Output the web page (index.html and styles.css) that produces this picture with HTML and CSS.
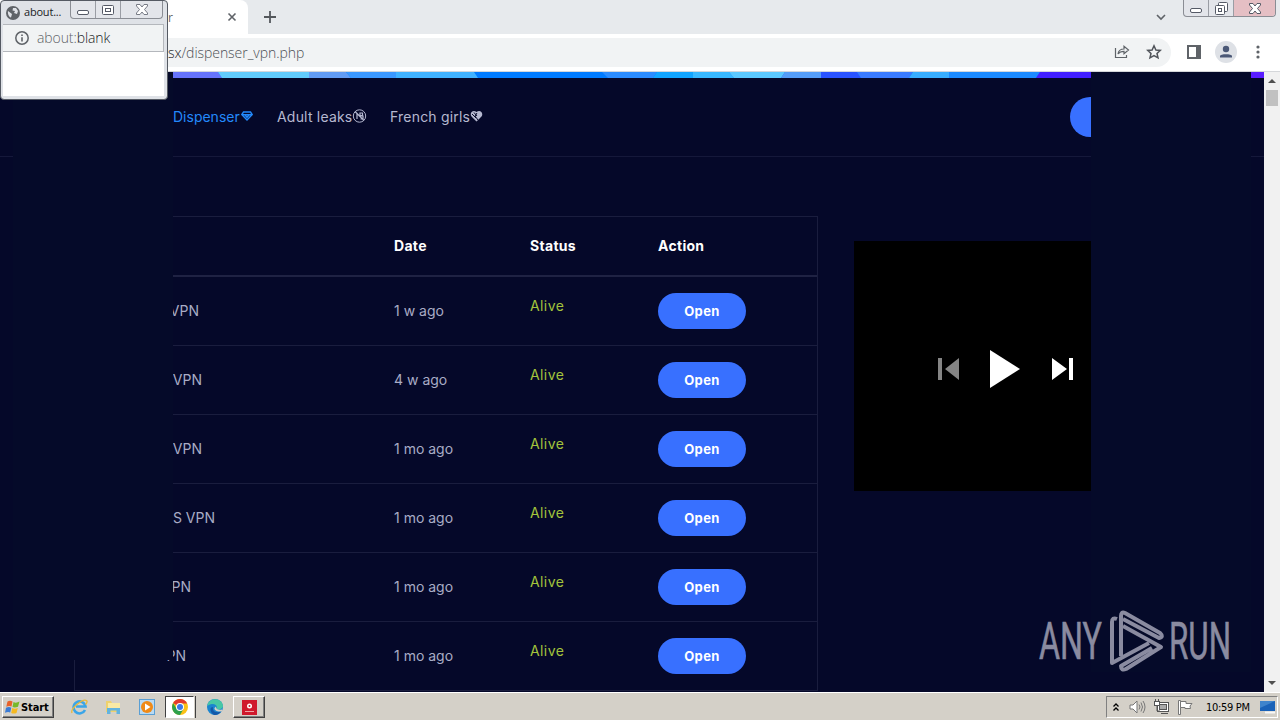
FILE: index.html
```html
<!DOCTYPE html>
<html lang="en">
<head>
    <meta charset="UTF-8">
    <meta name="viewport" content="width=device-width, initial-scale=1.0">
    <link rel="stylesheet" href="styles.css">
    <title>Dispenser</title>
</head>
<body>
    <!-- browser tabs -->
    <div class="tab-strip">
        <div class="tab">
            <span class="tab-title">r</span>
            <svg class="tab-close" width="10" height="10" viewBox="0 0 10 10"><path d="M1.500 1.500L8.500 8.500M8.500 1.500L1.500 8.500" stroke="#5f6368" stroke-width="1.600"/></svg>
        </div>
        <svg class="new-tab" width="12" height="12" viewBox="0 0 12 12"><path d="M6 0V12M0 6H12" stroke="#54585c" stroke-width="1.800"/></svg>
        <svg class="tab-search" width="10" height="7" viewBox="0 0 10 7"><path d="M1 1L5 5L9 1" fill="none" stroke="#5f6368" stroke-width="1.600"/></svg>
        <div class="win-buttons">
            <span class="win-btn"><svg width="12" height="12" viewBox="0 0 12 12"><rect x=".5" y="6.500" width="11" height="4" rx="1.500" fill="#fff" stroke="#555a66"/></svg></span>
            <span class="win-btn"><svg width="13" height="13" viewBox="0 0 13 13" fill="#fff" stroke="#555a66"><rect x="3.500" y=".5" width="9" height="9" rx="1"/><rect x=".5" y="3.500" width="9" height="9" rx="1"/><rect x="3.500" y="6.500" width="3" height="3"/></svg></span>
            <span class="win-btn win-close"><svg width="12" height="11" viewBox="0 0 12 11"><path d="M.5.5H4L6 3L8 .5H11.5V2L8.500 5.500L11.500 9V10.500H8L6 8L4 10.500H.5V9L3.500 5.500L.5 2Z" fill="#fff" stroke="#555a66"/></svg></span>
        </div>
    </div>

    <!-- address bar -->
    <div class="toolbar">
        <div class="address">
            <span class="url"><b>sx</b>/dispenser_vpn.php</span>
            <svg width="16" height="14" viewBox="0 0 16 14" fill="none" stroke="#5f6368" stroke-width="1.200"><path d="M1.500 3V12.500H12.500V10"/><path d="M4 9C4.500 5.500 7 4 10 4V1.300L14.500 5L10 8.700V6.300C7.500 6.300 5.500 7 4 9Z"/></svg>
            <svg width="16" height="16" viewBox="0 0 16 16"><path d="M8 1.800L9.900 6L14.300 6.400L11 9.400L12 13.800L8 11.500L4 13.800L5 9.400L1.700 6.400L6.100 6Z" fill="none" stroke="#50545a" stroke-width="1.500"/></svg>
        </div>
        <svg class="side-panel" width="14" height="14" viewBox="0 0 14 14"><rect x="1" y="1" width="12" height="12" fill="#fff" stroke="#5f6368" stroke-width="2"/><rect x="9" y="0" width="5" height="14" fill="#5f6368"/></svg>
        <svg class="profile" width="22" height="22" viewBox="0 0 22 22"><circle cx="11" cy="11" r="11" fill="#dee1e6"/><circle cx="11" cy="8" r="3.200" fill="#4b5876"/><path d="M5 16.500V15C5 12.500 17 12.500 17 15V16.500Z" fill="#4b5876"/></svg>
        <svg class="menu" width="4" height="14" viewBox="0 0 4 14" fill="#5f6368"><circle cx="2" cy="2" r="1.600"/><circle cx="2" cy="7" r="1.600"/><circle cx="2" cy="12" r="1.600"/></svg>
    </div>

    <div class="viewport">
        <main class="page">
            <svg class="rainbow" width="1264" height="6" viewBox="0 0 1264 6">
                <rect width="1264" height="6" fill="#007bff"/>
                <rect width="173" height="6" fill="#050829"/>
                <path d="M173 0H218L222 6H173Z" fill="#6673fb"/>
                <path d="M218 0H309V6H222Z" fill="#62ccfc"/>
                <path d="M309 0H346L351 6H309Z" fill="#629cf5"/>
                <path d="M346 0H396V6H351Z" fill="#3b98ff"/>
                <path d="M396 0H474L478 6H396Z" fill="#40b2ff"/>
                <path d="M602 0H657L653 6H608Z" fill="#2b8cff"/>
                <path d="M657 0H693V6H653Z" fill="#12a5ff"/>
                <path d="M693 0H729L734 6H693Z" fill="#38b8ff"/>
                <path d="M729 0H785L781 6H734Z" fill="#5cc9ff"/>
                <path d="M785 0H821V6H781Z" fill="#559df8"/>
                <path d="M821 0H857L861 6H821Z" fill="#2a53ff"/>
                <path d="M857 0H913L909 6H861Z" fill="#3a7bff"/>
                <path d="M913 0H949V6H909Z" fill="#38aeff"/>
                <path d="M949 0H1040L1036 6H949Z" fill="#1c8aff"/>
                <path d="M1040 0H1095V6H1036Z" fill="#421fff"/>
                <rect x="1095" width="169" height="6" fill="#5a1dff"/>
            </svg>
            <header class="navbar">
                <nav class="navigation">
                    <a class="item active">Dispenser<svg width="12" height="10" viewBox="0 0 12 10" fill="none" stroke="#2389fb" stroke-width="1.400"><path d="M2.500 1H9.500L11.200 3.500L6 9L.8 3.500Z"/><path d="M1 3.700H11M4 4L6 6.500L8 4"/></svg></a>
                    <a class="item leaks">Adult leaks<svg width="15" height="14" viewBox="0 0 15 14" fill="none" stroke="#b5b8d0"><circle cx="7.500" cy="7" r="6.200"/><path d="M3 2.500L12 11.500M5 4.500V10M8 4H10.500V6.500H8ZM7.500 7H11V10H8.500" stroke-width="1.200"/></svg></a>
                    <a class="item girls">French girls<svg width="13" height="12" viewBox="0 0 13 12"><path d="M6.500 11.500L1.500 6.500C-1 3 3-1 6.500 2C10-1 14 3 11.500 6.500Z" fill="#b5b8d0"/><path d="M2 4L6 8M4 2.500L7 6M7 3L5 6L8 10" stroke="#050829" fill="none"/></svg></a>
                </nav>
                <span class="login"></span>
            </header>

            <div class="content">
                <div class="table">
                    <div class="row head"><span></span><span>Date</span><span>Status</span><span>Action</span></div>
                    <div class="row"><span class="name">VPN</span><span>1 w ago</span><span class="alive">Alive</span><a class="open">Open</a></div>
                    <div class="row"><span class="name">VPN</span><span>4 w ago</span><span class="alive">Alive</span><a class="open">Open</a></div>
                    <div class="row"><span class="name">VPN</span><span>1 mo ago</span><span class="alive">Alive</span><a class="open">Open</a></div>
                    <div class="row"><span class="name">S VPN</span><span>1 mo ago</span><span class="alive">Alive</span><a class="open">Open</a></div>
                    <div class="row"><span class="name">PN</span><span>1 mo ago</span><span class="alive">Alive</span><a class="open">Open</a></div>
                    <div class="row"><span class="name">PN</span><span>1 mo ago</span><span class="alive">Alive</span><a class="open">Open</a></div>
                </div>
                <div class="video">
                    <svg width="22" height="22" viewBox="0 0 22 22" fill="#858585"><path d="M1 0H5V22H1ZM22 0V22L8 11Z"/></svg>
                    <svg width="30" height="38" viewBox="0 0 30 38" fill="#fff"><path d="M0 0L30 19L0 38Z"/></svg>
                    <svg width="22" height="22" viewBox="0 0 22 22" fill="#fff"><path d="M18 0H22V22H18ZM1 0V22L16 11Z"/></svg>
                </div>
            </div>

            <!-- side banners -->
            <div class="banner banner-left"></div>
            <div class="banner banner-right"></div>

            <svg class="watermark" width="210" height="64" viewBox="0 0 210 64">
                <text x="1" y="49" textLength="63" lengthAdjust="spacingAndGlyphs">ANY</text>
                <text x="131" y="49" textLength="62" lengthAdjust="spacingAndGlyphs">RUN</text>
                <g fill="none" stroke="#8a8ba0" stroke-width="4" stroke-linejoin="round">
                    <path d="M79 9Q74 7 74 12V53L111 33"/>
                    <path d="M83 46V6Q83 1 87 3L122 23Q126 27 121 28L85 9"/>
                    <path d="M85 16L123 37L88 59Q83 61 83 56L114 38"/>
                </g>
            </svg>
        </main>
        <div class="scrollbar">
            <svg width="8" height="4" viewBox="0 0 8 4"><path d="M0 4L4 0L8 4Z" fill="#505050"/></svg>
            <span class="thumb"></span>
            <svg width="8" height="4" viewBox="0 0 8 4"><path d="M0 0L4 4L8 0Z" fill="#505050"/></svg>
        </div>
    </div>

    <footer class="taskbar">
        <div class="start">
            <svg width="15" height="14" viewBox="0 0 15 14"><path d="M2.500 1.500Q5 0 7.500 1.500L6.500 6.500Q4 5.500 1.300 6.800Z" fill="#e8622a"/><path d="M8.500 2Q11 3.500 14.500 1.500L13 6.700Q10 8 7.500 7Z" fill="#76b82a"/><path d="M1 7.800Q4 6.500 6.300 7.700L5.200 12.500Q3 11.500 0 12.800Z" fill="#3a7bd5"/><path d="M7.200 8Q10 9.500 12.800 8L11.500 13Q9 14 6.200 13Z" fill="#f5b921"/></svg>
            Start
        </div>
        <div class="quick">
            <svg width="17" height="16" viewBox="0 0 17 16" fill="none"><path d="M14 11A6 6 0 1 1 14.500 7.500H5" stroke="#3aa5e8" stroke-width="2.600"/><path d="M1 14C-1 10 12-1 15.500 1.500C17 3 15 5 14.500 5.500" stroke="#e9b93a" stroke-width="1.300"/></svg>
            <svg class="explorer" width="16" height="16" viewBox="0 0 16 16"><path d="M1 2H6L7 4H14V13H1Z" fill="#eed16d"/><path d="M3 4H15V9H3Z" fill="#f8e9a5"/><path d="M2 15V9H15V15H11.500V11.500H5.500V15Z" fill="#62b3df"/></svg>
            <svg class="player" width="16" height="16" viewBox="0 0 16 16"><rect x=".5" y=".5" width="15" height="15" fill="#b9daf3" stroke="#5a9fd4"/><circle cx="8" cy="8" r="6" fill="#f08a17"/><path d="M6 4.500L11.500 8L6 11.500Z" fill="#fff"/></svg>
            <span class="task running">
                <svg width="16" height="16" viewBox="0 0 16 16"><circle cx="8" cy="8" r="8" fill="#fbc116"/><path d="M8 8L1.100 4A8 8 0 0 1 14.900 4L15 4.500H8Z" fill="#e33b2e"/><path d="M1.100 4A8 8 0 0 0 8 16L11.500 10L8 8L4.500 9.800Z" fill="#2da14c"/><circle cx="8" cy="8" r="4" fill="#fff"/><circle cx="8" cy="8" r="3" fill="#3b78e7"/></svg>
            </span>
            <svg class="edge" width="16" height="16" viewBox="0 0 16 16"><circle cx="8" cy="8" r="8" fill="#1b85cf"/><path d="M.5 6C2-1.500 15-2 16 7C16 10 11 11.500 9.500 10C11 7 8 4.500 5 5C3 5 1.500 6 .5 7Z" fill="#48c7a5"/><path d="M6 8C5 12 9 14.500 14 12.500A8 8 0 0 1 7 16C3 14 2 8 6 8Z" fill="#1458a8"/><path d="M9 7.500C9 10 11 11.500 15 10.500L15.500 12C12 13.500 7 12 7.500 9Z" fill="#d4d0c8"/></svg>
            <span class="task">
                <svg width="15" height="15" viewBox="0 0 15 15"><rect width="15" height="15" fill="#d0192c"/><circle cx="7.500" cy="6" r="2.500" fill="#fff"/><circle cx="7.500" cy="6" r="1" fill="#d0192c"/><path d="M3 11.500H12" stroke="#f0a5a5"/></svg>
            </span>
        </div>
        <div class="tray">
            <svg class="chevrons" width="6" height="9" viewBox="0 0 6 9" fill="none" stroke="#000" stroke-width="1.300"><path d="M.5 3.500L3 1L5.500 3.500M.5 7.500L3 5L5.500 7.500"/></svg>
            <svg class="sound" width="17" height="14" viewBox="0 0 17 14" fill="none" stroke="#777"><path d="M1 5H4L8 1V13L4 9H1Z" fill="#fff"/><path d="M10 4.500Q12 7 10 9.500M12 2.500Q15 7 12 11.500M14 1Q18 7 14 13"/></svg>
            <svg class="network" width="17" height="16" viewBox="0 0 17 16" stroke="#555"><rect x="4.500" y="3.500" width="11" height="9" fill="#fff"/><rect x="6.500" y="5.500" width="7" height="5" fill="#aaa"/><path d="M8 14.500H15M2.500 0V3M5.500 0V3M4 6V12H7" fill="none"/><rect x="1.500" y="2.500" width="5" height="4" fill="#fff"/></svg>
            <svg class="flag" width="16" height="15" viewBox="0 0 16 15" fill="#fff" stroke="#777"><path d="M1.500 .5H3.500V14.500H1.500Z"/><path d="M3.500 1.500H9V3.500H15L13 6L13.500 8.500H8V7.500H3.500Z"/></svg>
            <span class="clock">10:59 PM</span>
            <svg width="16" height="14" viewBox="0 0 16 14"><path d="M0 1H15V11H0Z" fill="#1a62b8"/><path d="M0 1H15L0 8Z" fill="#3f84cc"/><path d="M5 12.500H15" stroke="#f7f7f7" stroke-width="2"/></svg>
        </div>
    </footer>

    <!-- small popup window -->
    <div class="popup">
        <div class="popup-bar">
            <svg width="14" height="14" viewBox="0 0 14 14"><circle cx="7" cy="7" r="7" fill="#5f6368"/><path d="M2 5L6 8L5 11.500C3 11 1.500 8 2 5ZM7 2H10L12 5L11 8L8 7L9 5L6.500 4.500Z" fill="#dfe2e7"/></svg>
            <span class="popup-title">about...</span>
            <div class="win-buttons">
                <span class="win-btn"><svg width="12" height="12" viewBox="0 0 12 12"><rect x=".5" y="6.500" width="11" height="4" rx="1.500" fill="#fff" stroke="#555a66"/></svg></span>
                <span class="win-btn"><svg width="12" height="10" viewBox="0 0 12 10" fill="#fff" stroke="#555a66"><rect x=".5" y=".5" width="11" height="9" rx="1"/><rect x="3.500" y="3.500" width="5" height="3"/></svg></span>
                <span class="win-btn"><svg width="12" height="11" viewBox="0 0 12 11"><path d="M.5.5H4L6 3L8 .5H11.5V2L8.500 5.500L11.500 9V10.500H8L6 8L4 10.500H.5V9L3.500 5.500L.5 2Z" fill="#fff" stroke="#777b85"/></svg></span>
            </div>
        </div>
        <div class="popup-address">
            <svg width="14" height="14" viewBox="0 0 14 14"><circle cx="7" cy="7" r="6.200" fill="none" stroke="#5f6368" stroke-width="1.500"/><path d="M7 6.200V10.500M7 3.500V5" stroke="#5f6368" stroke-width="1.600"/></svg>
            <span class="popup-url">about:<b>blank</b></span>
        </div>
        <div class="popup-body"></div>
    </div>
</body>
</html>
```
FILE: styles.css
```css
* {
    box-sizing: border-box;
}

body {
    margin: 0;
    width: 1280px;
    height: 720px;
    overflow: hidden;
    display: flex;
    flex-direction: column;
    position: relative;
    font-family: "Open Sans", sans-serif;
}

svg {
    display: block;
    flex: none;
}

/* Browser tabs */
.tab-strip {
    height: 34px;
    display: flex;
    align-items: flex-start;
    background-color: #e7eaed;
}

.tab {
    width: 248px;
    height: 34px;
    padding: 0 11px 0 168px;
    display: flex;
    align-items: center;
    justify-content: space-between;
    background-color: #fff;
    border-radius: 0 8px 0 0;
}

.tab-title {
    font-size: 12px;
    color: #5f6368;
}

.new-tab {
    margin: 11px 0 0 16px;
}

.tab-search {
    margin: 14px 17px 0 auto;
}

.win-buttons {
    display: flex;
    height: 18px;
    border: 1px solid #8a8d94;
    border-top: 0;
    border-radius: 0 0 4px 4px;
    overflow: hidden;
    background-color: #e3e5ea;
}

.win-btn {
    width: 25px;
    display: flex;
    align-items: center;
    justify-content: center;
    border-right: 1px solid #9a9da4;
}

.win-btn:last-child {
    width: 41px;
    border-right: 0;
}

.tab-strip .win-buttons {
    height: 17px;
    margin-right: 4px;
}

.win-close {
    background-color: #e5bfc4;
}

/* Address bar */
.toolbar {
    height: 38px;
    padding: 4px 20px 5px 0;
    display: flex;
    align-items: center;
    background-color: #fff;
    border-bottom: 1px solid #d5d7da;
}

.address {
    width: 1171px;
    height: 29px;
    padding: 0 9px 0 168px;
    display: flex;
    align-items: center;
    gap: 16px;
    background-color: #f1f3f4;
    border-radius: 0 15px 15px 0;
}

.url {
    margin-right: auto;
    font-size: 14px;
    font-weight: 300;
    letter-spacing: -0.05px;
    color: #4c5054;
}

.url b {
    font-weight: 300;
    color: #202124;
}

.side-panel {
    margin-left: 16px;
}

.profile {
    margin-left: 14px;
}

.menu {
    margin-left: auto;
}

/* Page */
.viewport {
    height: 620px;
    display: flex;
}

.page {
    position: relative;
    width: 1264px;
    height: 620px;
    overflow: hidden;
    background-color: #050829;
    color: #a9acc6;
    font-family: Inter, sans-serif;
    font-size: 14px;
}

.navbar {
    height: 79px;
    padding-left: 173px;
    display: flex;
    align-items: center;
    border-bottom: 1px solid #15183a;
}

.navigation {
    display: flex;
    padding-bottom: 2px;
}

.item {
    display: flex;
    align-items: center;
    letter-spacing: 0.2px;
    color: #b5b8d0;
}

.active {
    width: 104px;
    letter-spacing: 0;
    gap: 1px;
    color: #2389fb;
}

.leaks {
    width: 113px;
}

.login {
    width: 120px;
    height: 40px;
    margin-left: auto;
    margin-right: 74px;
    border-radius: 20px;
    background-color: #3870ff;
}

.content {
    padding: 59px 0 0 74px;
    display: flex;
    align-items: flex-start;
    gap: 36px;
}

.table {
    width: 744px;
    border: 1px solid #1a1d3e;
    border-bottom: 0;
}

.row {
    height: 69px;
    display: grid;
    grid-template-columns: 319px 136px 128px 1fr;
    align-items: center;
    border-bottom: 1px solid #1a1d3e;
}

.row span {
    padding-bottom: 2px;
}

.head {
    height: 60px;
    border-bottom: 2px solid #1f2243;
    color: #fff;
    font-weight: 700;
    letter-spacing: 0.3px;
}

.name {
    padding-right: 192px;
    text-align: right;
}

.row:nth-child(2) .name {
    padding-right: 195px;
}

.row:nth-child(5) .name {
    padding-right: 179px;
}

.row:nth-child(6) .name {
    padding-right: 203px;
}

.row:nth-child(7) .name {
    padding-right: 208px;
}

.row .alive {
    padding-bottom: 12px;
    letter-spacing: 0.4px;
    color: #a3c43c;
}

.open {
    width: 88px;
    height: 36px;
    display: flex;
    align-items: center;
    justify-content: center;
    border-radius: 18px;
    background-color: #3870ff;
    color: #fff;
    font-size: 13px;
    font-weight: 700;
    letter-spacing: 0.4px;
}

.video {
    width: 302px;
    height: 250px;
    margin-top: 25px;
    padding-top: 5px;
    display: flex;
    align-items: center;
    justify-content: center;
    gap: 31px;
    background-color: #000;
}

.banner {
    position: absolute;
    top: 0;
    width: 160px;
    background-color: #050a29;
}

.banner-left {
    left: 13px;
    height: 588px;
}

.banner-right {
    left: 1091px;
    height: 600px;
}

.watermark {
    position: absolute;
    left: 1038px;
    top: 538px;
}

.watermark text {
    font-family: Roboto, sans-serif;
    font-size: 52px;
    fill: #8a8ba0;
    stroke: #8a8ba0;
    stroke-width: 0.6px;
}

.scrollbar {
    width: 16px;
    padding: 7px 0 7px;
    display: flex;
    flex-direction: column;
    align-items: center;
    background-color: #f1f1f1;
}

.thumb {
    width: 12px;
    height: 16px;
    margin: 7px 0 auto;
    background-color: #c1c1c1;
}

/* Taskbar */
.taskbar {
    height: 28px;
    padding: 2px 2px 1px;
    display: flex;
    align-items: center;
    border-top: 1px solid #fff;
    background-color: #d4d0c8;
    font-family: "DejaVu Sans Condensed", "DejaVu Sans", sans-serif;
    font-size: 11px;
    color: #000;
}

.start {
    width: 52px;
    height: 22px;
    padding-left: 2px;
    display: flex;
    align-items: center;
    gap: 1px;
    border: 1px solid;
    border-color: #fff #404040 #404040 #fff;
    box-shadow: inset -1px -1px #808080;
    font-weight: 700;
    letter-spacing: -0.1px;
}

.quick {
    display: flex;
    align-items: center;
    margin-left: 17px;
}

.explorer {
    margin-left: 17px;
}

.player {
    margin-left: 18px;
}

.task {
    width: 32px;
    height: 22px;
    display: flex;
    align-items: center;
    justify-content: center;
    border: 1px solid;
    border-color: #fff #404040 #404040 #fff;
    box-shadow: inset -1px -1px #808080;
}

.running {
    width: 29px;
    margin-left: 10px;
    border-color: #404040 #fff #fff #404040;
    background-color: #fff;
    box-shadow: 1px 0 #d4d0c8, 2px 0 #404040;
}

.edge {
    margin: 0 10px 0 13px;
}

.tray {
    height: 22px;
    width: 172px;
    margin-left: auto;
    padding: 0 1px 0 6px;
    display: flex;
    align-items: center;
    border: 1px solid;
    border-color: #808080 #fff #fff #808080;
}

.sound {
    margin-left: 10px;
}

.network {
    margin-left: 7px;
}

.flag {
    margin-left: 7px;
}

.clock {
    width: 54px;
    margin-left: 13px;
    letter-spacing: -0.3px;
    white-space: nowrap;
}

/* Popup */
.popup {
    position: absolute;
    left: 0;
    top: 0;
    width: 168px;
    height: 100px;
    padding: 0 3px 3px 2px;
    display: flex;
    flex-direction: column;
    border: 1px solid #555a63;
    border-radius: 4px;
    background-color: #dfe2e7;
}

.popup-bar {
    height: 23px;
    padding-left: 3px;
    display: flex;
    align-items: center;
}

.popup-title {
    width: 46px;
    margin-left: 4px;
    padding-bottom: 2px;
    font-size: 11px;
    letter-spacing: -0.2px;
    color: #202124;
}

.popup-bar .win-buttons {
    align-self: flex-start;
}

.popup-address {
    height: 28px;
    padding-left: 12px;
    display: flex;
    align-items: center;
    gap: 8px;
    border: 1px solid #b4b7bc;
    border-left: 0;
    background-color: #f1f3f4;
    font-size: 14px;
    font-weight: 300;
    color: #5f6368;
}

.popup-url {
    padding-bottom: 2px;
    letter-spacing: -0.1px;
}

.popup-address b {
    font-weight: 300;
    color: #202124;
}

.popup-body {
    flex: 1;
    background-color: #fff;
}
```
